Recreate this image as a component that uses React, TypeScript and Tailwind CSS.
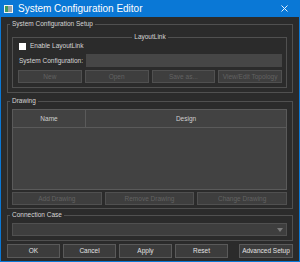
import React from "react";

const DisabledButton = ({ label }: { label: string }) => (
  <button
    disabled
    className="h-[13px] border border-[#505050] bg-[#3e3e3e] text-[#626262] text-[6.5px] leading-[11px]"
  >
    {label}
  </button>
);

const ActionButton = ({ label, wide }: { label: string; wide?: boolean }) => (
  <button
    className={
      wide
        ? "ml-auto h-[14px] w-[54px] border border-[#5a5a5a] bg-[#3c3c3c] text-[#e2e2e2] text-[6.5px] leading-[12px]"
        : "h-[14px] w-[53px] border border-[#5a5a5a] bg-[#3c3c3c] text-[#e2e2e2] text-[6.5px] leading-[12px]"
    }
  >
    {label}
  </button>
);

export default function App() {
  return (
    <div className="w-[300px] h-[262px] bg-[#0a78d6] flex flex-col font-['Liberation_Sans',Arial,sans-serif]">
      {/* title bar */}
      <div className="h-[17px] flex items-center pl-[4px] pr-[12px]">
        <svg width="9" height="8" viewBox="0 0 9 8" className="mr-[5px]">
          <rect x="0.5" y="0.5" width="8" height="7" fill="#9aa3a8" stroke="#f2f2f2" />
          <rect x="1" y="1" width="3" height="6" fill="#3f9a5a" />
        </svg>
        <span className="text-white text-[10px] leading-[12px]">System Configuration Editor</span>
        <svg width="7" height="7" viewBox="0 0 7 7" className="ml-auto">
          <path d="M0.5 0.5 L6.5 6.5 M6.5 0.5 L0.5 6.5" stroke="#e8f1fb" strokeWidth="1" />
        </svg>
      </div>

      {/* body */}
      <div className="flex-1 mx-[1px] mb-[1px] bg-[#2b2b2b] flex flex-col pt-[3px] px-[6px] text-[6.5px] leading-[8px] text-[#d6d6d6]">
        <fieldset className="border border-[#505050] pl-[4px] pr-[5px] pb-[4px] min-w-0">
          <legend className="px-[2px] ml-[-2px]">System Configuration Setup</legend>
          <fieldset className="mt-[5px] border border-[#505050] pl-[5px] pr-[4px] pb-[4px] min-w-0">
            <legend className="mx-auto px-[2px]">LayoutLink</legend>
            <div className="h-[10px] flex items-center">
              <span className="w-[7px] h-[7px] bg-white mr-[4px] ml-[1px]" />
              <span>Enable LayoutLink</span>
            </div>
            <div className="mt-[3px] h-[13px] flex items-center">
              <span className="w-[68px] pl-[1px]">System Configuration:</span>
              <div className="flex-1 h-[13px] bg-[#464646]" />
            </div>
            <div className="mt-[3px] grid grid-cols-4 gap-[3px]">
              <DisabledButton label="New" />
              <DisabledButton label="Open" />
              <DisabledButton label="Save as..." />
              <DisabledButton label="View/Edit Topology" />
            </div>
          </fieldset>
        </fieldset>

        <fieldset className="mt-[4px] border border-[#505050] pl-[4px] pr-[5px] pb-[3px] min-w-0">
          <legend className="px-[2px] ml-[-2px]">Drawing</legend>
          <div className="mt-[4px] h-[81px] border border-[#5a5a5a] bg-[#424242] flex flex-col">
            <div className="h-[18px] flex border-b border-[#5a5a5a] text-[#cfcfcf]">
              <div className="w-[73px] border-r border-[#5a5a5a] flex items-center justify-center">Name</div>
              <div className="flex-1 flex items-center justify-center">Design</div>
            </div>
          </div>
          <div className="mt-[2px] grid grid-cols-3 gap-[3px]">
            <DisabledButton label="Add Drawing" />
            <DisabledButton label="Remove Drawing" />
            <DisabledButton label="Change Drawing" />
          </div>
        </fieldset>

        <fieldset className="mt-[2px] border border-[#505050] pl-[4px] pr-[5px] pb-[4px] min-w-0">
          <legend className="px-[2px] ml-[-2px]">Connection Case</legend>
          <div className="mt-[4px] h-[13px] border border-[#505050] bg-[#3e3e3e] flex items-center justify-end pr-[3px]">
            <svg width="6" height="4" viewBox="0 0 6 4">
              <path d="M0 0 L6 0 L3 4 Z" fill="#7a7a7a" />
            </svg>
          </div>
        </fieldset>

        <div className="mt-[3px] flex gap-[3px]">
          <ActionButton label="OK" />
          <ActionButton label="Cancel" />
          <ActionButton label="Apply" />
          <ActionButton label="Reset" />
          <ActionButton label="Advanced Setup" wide />
        </div>
      </div>
    </div>
  );
}
